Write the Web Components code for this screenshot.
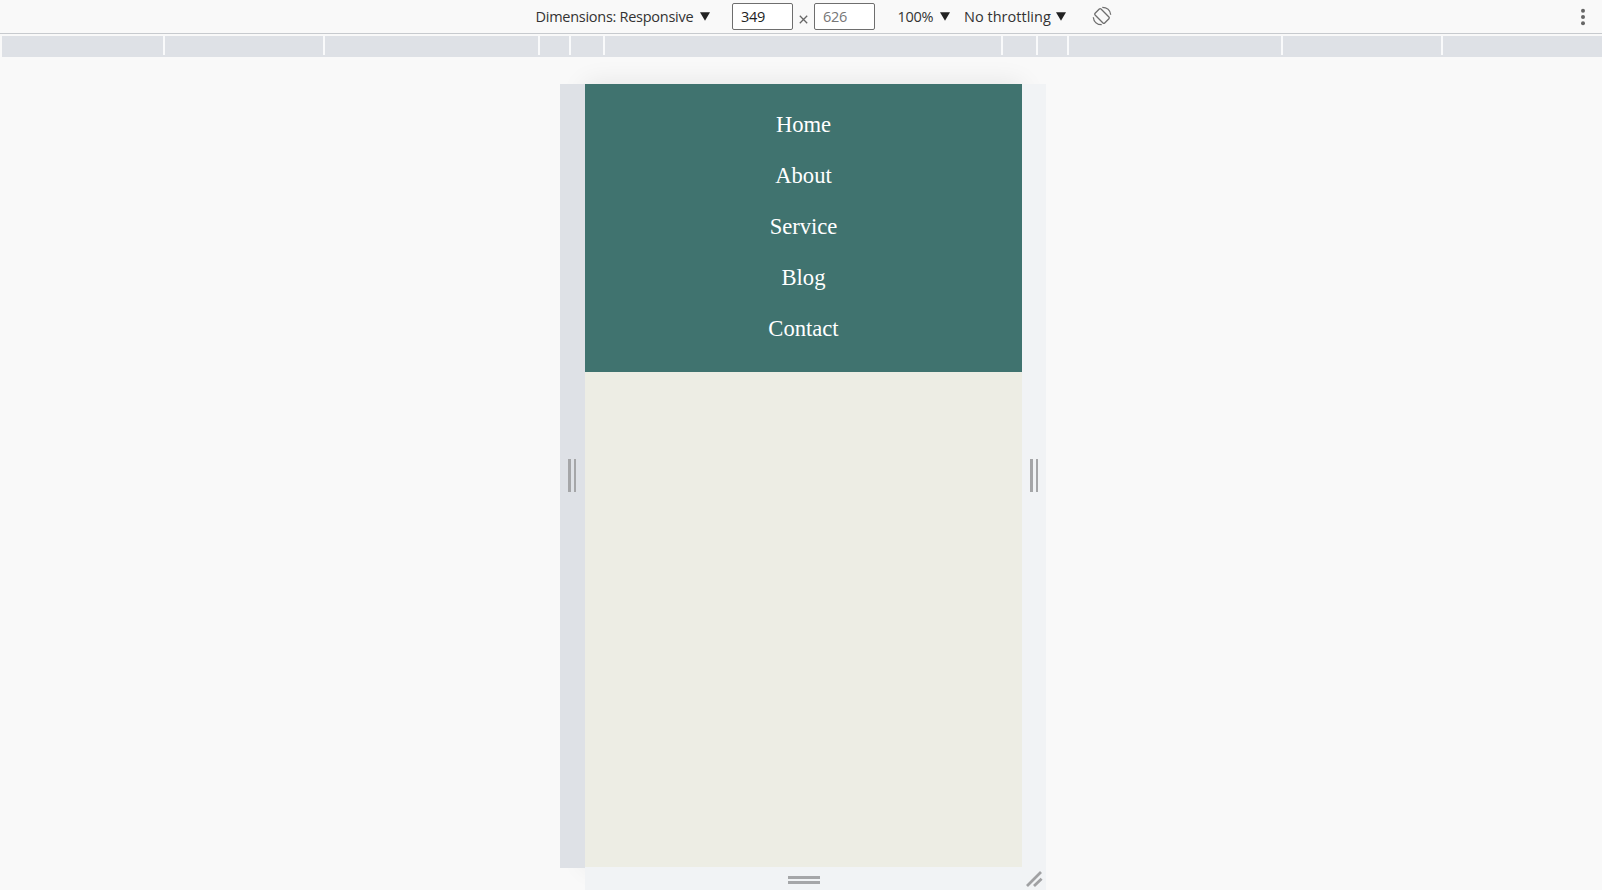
<!DOCTYPE html>
<html lang="en"><head><meta charset="utf-8"><title>Responsive preview</title>
<style>html,body{margin:0;height:100%;overflow:hidden;background:#f9f9f9}</style></head><body>
<device-preview></device-preview>
<script>
const define=(name,html)=>{const t=document.createElement('template');t.innerHTML=html;
customElements.define(name,class extends HTMLElement{constructor(){super();this.attachShadow({mode:'open'}).append(t.content.cloneNode(true));}});};

define('drop-label',`<style>:host{display:flex;align-items:center;height:33px;color:#333;white-space:nowrap}
span{flex:1}svg{display:block;flex:none}</style><span><slot></slot></span>
<svg width="10" height="9" viewBox="0 0 10 9"><path d="M0 0.3H10L5 8.8Z" fill="#222"/></svg>`);

define('size-field',`<style>:host{display:block;box-sizing:border-box;width:61px;height:27px;border:1px solid #6e6e6e;border-radius:2px;background:#fff;padding-left:8px;line-height:25px;font-size:14.5px;letter-spacing:-.3px;color:#222}
:host([muted]){color:#777}</style><slot></slot>`);

define('device-toolbar',`<style>:host{display:flex;align-items:center;box-sizing:border-box;height:34px;border-bottom:1px solid #c7cace;padding-left:535.5px;font:14.5px "Open Sans","Noto Sans",sans-serif;background:#f9f9f9}
.dim{width:174.5px;letter-spacing:-.27px}.w{margin-left:22px}.x{width:21px;display:flex;justify-content:center;padding-top:5px}
.zoom{width:52px;margin-left:22.5px;letter-spacing:-.25px}.thr{width:102px;margin-left:14.5px;letter-spacing:.02px}
.rot{margin:-2px 0 0 26px}.more{margin-left:auto;margin-right:16px}svg{display:block}</style>
<drop-label class="dim">Dimensions: Responsive</drop-label>
<size-field class="w">349</size-field>
<span class="x"><svg width="9" height="9" viewBox="0 0 9 9"><path d="M.8.8 8.2 8.2M8.2.8.8 8.2" stroke="#666" stroke-width="1.3"/></svg></span>
<size-field muted>626</size-field>
<drop-label class="zoom">100%</drop-label>
<drop-label class="thr">No throttling</drop-label>
<svg class="rot" width="20" height="20" viewBox="0 0 20 20" fill="none" stroke="#6e6e6e" stroke-width="1.3"><rect x="5.8" y="3.2" width="8.4" height="13.6" rx="1.2" transform="rotate(-45 10 10)"/><path d="M10.3 1.3C14.8 1.3 18.3 4.2 18.7 8.8M9.7 18.7C5.2 18.7 1.7 15.8 1.3 11.2"/></svg>
<svg class="more" width="6" height="18" viewBox="0 0 6 18" fill="#666"><circle cx="3" cy="2.8" r="2"/><circle cx="3" cy="9" r="2"/><circle cx="3" cy="15.3" r="2"/></svg>`);

define('media-ruler',`<style>:host{display:grid;grid-template-columns:161px 158px 213px 29px 32px 396px 33px 29px 212px 158px 1fr;column-gap:2px;height:19px;margin:2px 0 0 2px;border-bottom:2px solid #dee1e6;background:#f9fafb}
i{background:#dee1e6}</style>${'<i></i>'.repeat(11)}`);

define('grip-bars',`<style>:host{display:flex;gap:3px;width:8px;height:33px}i{flex:1;background:#a5a6a8}
:host([across]){flex-direction:column;width:32px;height:8px;gap:2px}</style><i></i><i></i>`);

define('nav-item',`<style>:host{display:block;height:51px;line-height:51px;text-align:center;color:#fff;font-family:"Liberation Serif",serif;font-size:22.6px}</style><slot></slot>`);

define('nav-menu',`<style>:host{display:block;box-sizing:border-box;height:288px;padding-top:15px;background:#40736f}</style><slot></slot>`);

define('device-stage',`<style>:host{display:grid;grid-template:784px 1fr/25px 437px 24px;height:806px;margin:27px 0 0 560px;width:486px}
.screen{background:#edede4;height:783px;box-shadow:0 0 25px rgba(0,0,0,.09)}
.side{display:flex;align-items:center;justify-content:center;box-sizing:border-box;padding:0 1px 2px 0;background:#dee1e6;position:relative}
.right{background:#f1f3f5;padding-right:0}.bottom{grid-column:2;background:#f1f3f5;display:flex;justify-content:center;padding-top:9px;margin-top:-1px;position:relative}
.corner{background:#f1f3f5;padding:3px 0 0 4px;position:relative}svg{display:block}</style>
<div class="side"><grip-bars></grip-bars></div><div class="screen"><slot></slot></div>
<div class="side right"><grip-bars></grip-bars></div>
<div class="bottom"><grip-bars across></grip-bars></div>
<div class="corner"><svg width="17" height="16" viewBox="0 0 17 16" fill="none" stroke="#a0a1a3" stroke-width="2.8"><path d="M1 15 15 1M8 15 15.6 7.8"/></svg></div>`);

define('device-preview',`<style>:host{display:flex;flex-direction:column;height:890px;overflow:hidden;background:#f9f9f9}device-toolbar,media-ruler,device-stage{flex:none}</style>
<device-toolbar></device-toolbar><media-ruler></media-ruler>
<device-stage><nav-menu><nav-item>Home</nav-item><nav-item>About</nav-item><nav-item>Service</nav-item><nav-item>Blog</nav-item><nav-item>Contact</nav-item></nav-menu></device-stage>`);
</script></body></html>
